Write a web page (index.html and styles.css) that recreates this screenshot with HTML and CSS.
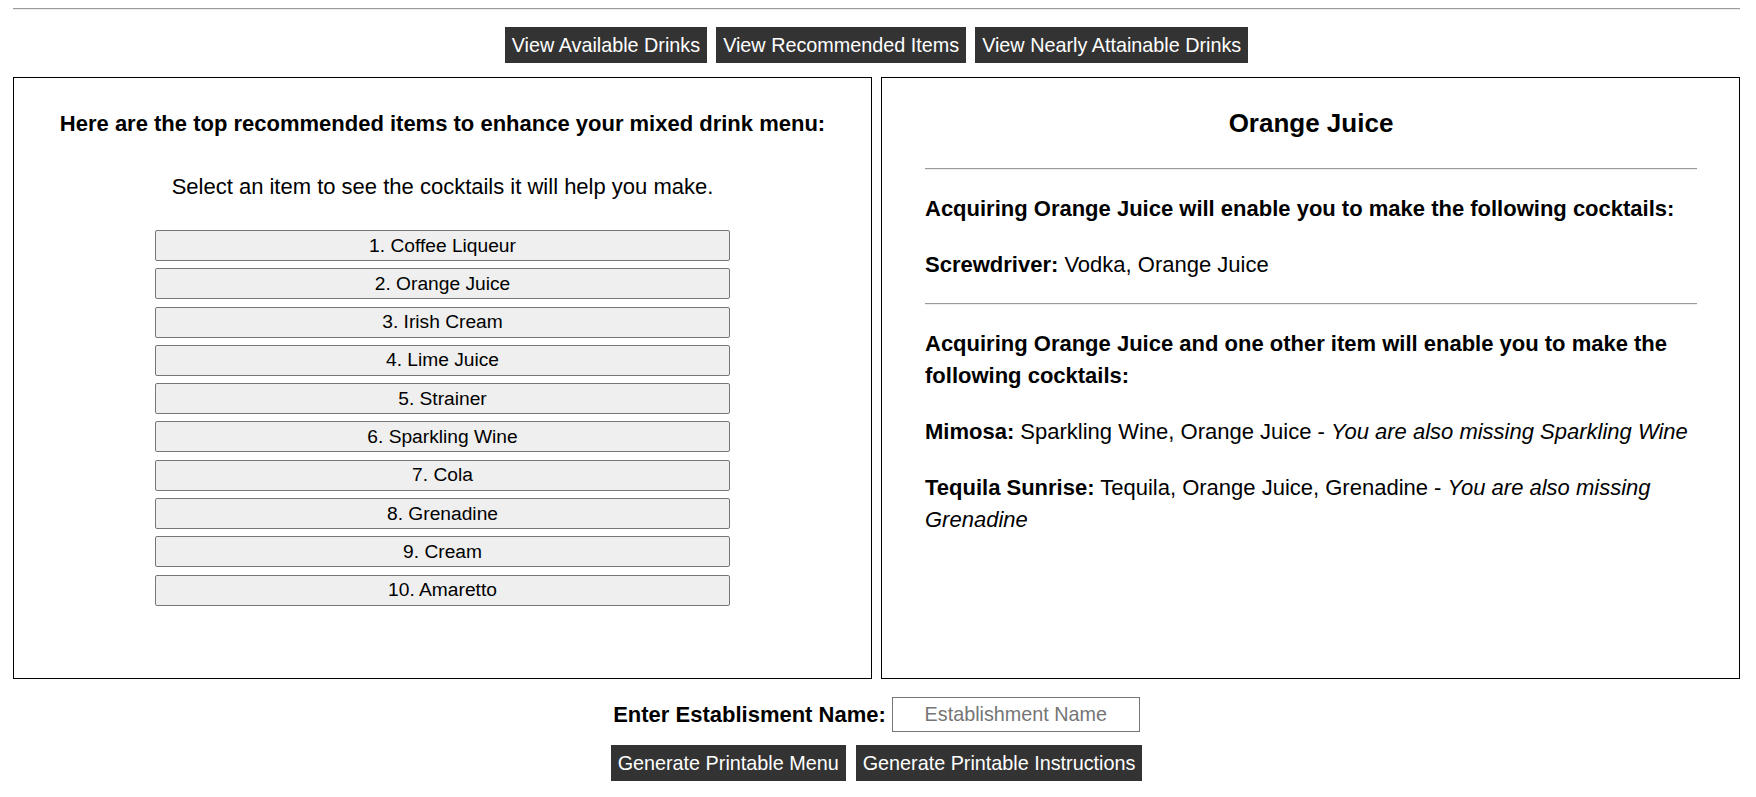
FILE: index.html
```html
<!DOCTYPE html>
<html>
<head>
<meta charset="utf-8">
<link rel="stylesheet" href="styles.css">
</head>
<body>
<hr class="top-rule">
<nav class="view-nav">
  <button class="dark-btn">View Available Drinks</button>
  <button class="dark-btn">View Recommended Items</button>
  <button class="dark-btn">View Nearly Attainable Drinks</button>
</nav>
<main class="panels">
  <section class="panel panel-left">
    <h3 class="panel-heading">Here are the top recommended items to enhance your mixed drink menu:</h3>
    <p class="hint">Select an item to see the cocktails it will help you make.</p>
    <div class="item-list">
      <button class="item-btn">1. Coffee Liqueur</button>
      <button class="item-btn">2. Orange Juice</button>
      <button class="item-btn">3. Irish Cream</button>
      <button class="item-btn">4. Lime Juice</button>
      <button class="item-btn">5. Strainer</button>
      <button class="item-btn">6. Sparkling Wine</button>
      <button class="item-btn">7. Cola</button>
      <button class="item-btn">8. Grenadine</button>
      <button class="item-btn">9. Cream</button>
      <button class="item-btn">10. Amaretto</button>
    </div>
  </section>
  <section class="panel panel-right">
    <h2 class="detail-title">Orange Juice</h2>
    <hr class="detail-rule">
    <p class="detail-lead">Acquiring Orange Juice will enable you to make the following cocktails:</p>
    <p class="cocktail"><b>Screwdriver:</b> Vodka, Orange Juice</p>
    <hr class="detail-rule">
    <p class="detail-lead">Acquiring Orange Juice and one other item will enable you to make the following cocktails:</p>
    <p class="cocktail"><b>Mimosa:</b> Sparkling Wine, Orange Juice - <i>You are also missing Sparkling Wine</i></p>
    <p class="cocktail"><b>Tequila Sunrise:</b> Tequila, Orange Juice, Grenadine - <i>You are also missing Grenadine</i></p>
  </section>
</main>
<div class="name-row">
  <label class="name-label" for="est">Enter Establisment Name:</label>
  <input class="name-input" id="est" type="text" placeholder="Establishment Name">
</div>
<div class="print-row">
  <button class="dark-btn">Generate Printable Menu</button>
  <button class="dark-btn">Generate Printable Instructions</button>
</div>
</body>
</html>
```
FILE: styles.css
```css
html, body {
  background: #fff;
}
body {
  margin: 0 16px 8px 13px;
  padding-top: 8px;
  font-family: "Liberation Sans", Arial, sans-serif;
  color: #000;
}
.top-rule {
  margin: 0;
  border: 0;
  border-top: 1px solid #9a9a9a;
  border-bottom: 1px solid #eeeeee;
  height: 0;
}
.view-nav {
  display: flex;
  justify-content: center;
  gap: 9px;
  margin-top: 17px;
}
.dark-btn {
  background: #333333;
  color: #fff;
  border: 0;
  border-radius: 0;
  font-family: "Liberation Sans", Arial, sans-serif;
  font-size: 19.8px;
  line-height: 24px;
  padding: 6px 7px;
  height: 36px;
}
.panels {
  display: grid;
  grid-template-columns: minmax(0, 1fr) minmax(0, 1fr);
  gap: 9px;
  margin-top: 14px;
}
.panel {
  height: 602px;
  box-sizing: border-box;
  border: 1px solid #000;
}
.panel-left {
  display: flex;
  flex-direction: column;
  align-items: center;
  padding-top: 33px;
}
.panel-heading {
  margin: 0;
  font-size: 22px;
  line-height: 26px;
  font-weight: bold;
  text-align: center;
}
.hint {
  margin: 37px 0 0 0;
  font-size: 22px;
  line-height: 26px;
}
.item-list {
  margin-top: 30px;
  width: 575px;
  display: flex;
  flex-direction: column;
  gap: 7.3px;
}
.item-btn {
  height: 31px;
  background: #efefef;
  border: 1px solid #767676;
  border-radius: 2px;
  font-family: "Liberation Sans", Arial, sans-serif;
  font-size: 19.2px;
  color: #000;
  padding: 0;
}
.panel-right {
  padding: 30px 42px 0 43px;
}
.detail-title {
  margin: 0;
  text-align: center;
  font-size: 26px;
  line-height: 30px;
}
.detail-rule {
  margin: 30px 0 0 0;
  border: 0;
  border-top: 1px solid #9a9a9a;
  border-bottom: 1px solid #eeeeee;
  height: 0;
}
.detail-lead {
  margin: 23px 0 0 0;
  font-weight: bold;
  font-size: 22px;
  line-height: 32px;
}
.cocktail {
  margin: 24px 0 0 0;
  font-size: 22px;
  line-height: 32px;
}
.cocktail + .detail-rule {
  margin-top: 22px;
}
.name-row {
  display: flex;
  justify-content: center;
  align-items: center;
  gap: 6px;
  margin-top: 18px;
}
.name-label {
  font-weight: bold;
  font-size: 22px;
}
.name-input {
  width: 248px;
  height: 35px;
  box-sizing: border-box;
  border: 1px solid #767676;
  font-family: "Liberation Sans", Arial, sans-serif;
  font-size: 19.8px;
  text-align: center;
  padding: 0 4px;
  margin: 0;
}
.name-input::placeholder {
  color: #757575;
}
.print-row {
  display: flex;
  justify-content: center;
  gap: 10px;
  margin-top: 13px;
}
```
